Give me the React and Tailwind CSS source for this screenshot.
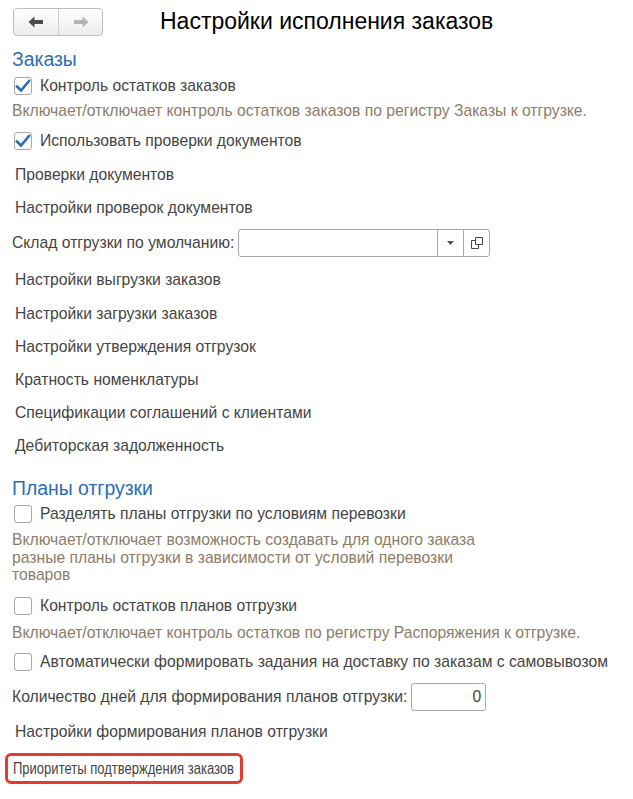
import React from "react";

const FONT = { fontFamily: '"Liberation Sans", Arial, sans-serif' };

function Checkbox({ checked }) {
  return (
    <span className="w-[18px] h-[18px] border border-[#a9a9a9] rounded-[3px] bg-white flex items-center justify-center shrink-0">
      {checked && (
        <svg width="16" height="14" viewBox="0 0 16 14">
          <path d="M2 7.5 L6 11.5 L14 2" fill="none" stroke="#2a6db5" strokeWidth="2.6" strokeLinecap="square" />
        </svg>
      )}
    </span>
  );
}

function CheckRow({ checked, label, h }) {
  return (
    <div className={`flex items-center gap-[8px] pl-[14px] ${h}`}>
      <Checkbox checked={checked} />
      <span className="text-[15.7px] text-[#444] whitespace-nowrap">{label}</span>
    </div>
  );
}

function LinkRow({ label, h = "h-[33px]" }) {
  return (
    <div className={`flex items-center pl-[15px] text-[15.7px] text-[#444] whitespace-nowrap ${h}`}>{label}</div>
  );
}

function Desc({ children, h }) {
  return (
    <div className={`pl-[12px] text-[15.7px] text-[#8b7c68] leading-[17.5px] flex items-center whitespace-nowrap ${h}`}>
      <div>{children}</div>
    </div>
  );
}

function Section({ title, h }) {
  return (
    <div className={`pl-[12px] text-[19.4px] text-[#2a6db5] flex items-center ${h}`}>{title}</div>
  );
}

export default function App() {
  return (
    <div className="w-[633px] h-[799px] bg-white overflow-hidden" style={FONT}>
      {/* header */}
      <div className="h-[46px] flex items-start">
        <div className="ml-[13px] mt-[8px] w-[90px] h-[28px] border border-[#bdbdbd] rounded-[4px] bg-gradient-to-b from-white to-[#ececec] flex">
          <div className="w-[45px] flex items-center justify-center border-r border-[#cfcfcf]">
            <svg width="16" height="12" viewBox="0 0 16 12">
              <path d="M0.5 6 L6.5 0.5 L6.5 4 L15 4 L15 8 L6.5 8 L6.5 11.5 Z" fill="#4a4a4a" />
            </svg>
          </div>
          <div className="flex-1 flex items-center justify-center">
            <svg width="16" height="12" viewBox="0 0 16 12">
              <path d="M15.5 6 L9.5 0.5 L9.5 4 L1 4 L1 8 L9.5 8 L9.5 11.5 Z" fill="#b4b4b4" />
            </svg>
          </div>
        </div>
        <div className="ml-[57px] mt-[6px] text-[23px] text-black leading-[30px]">Настройки исполнения заказов</div>
      </div>

      <Section title="Заказы" h="h-[28px]" />
      <CheckRow checked label="Контроль остатков заказов" h="h-[24px]" />
      <Desc h="h-[26px]">Включает/отключает контроль остатков заказов по регистру Заказы к отгрузке.</Desc>
      <CheckRow checked label="Использовать проверки документов" h="h-[34px]" />
      <LinkRow label="Проверки документов" h="h-[34px]" />
      <LinkRow label="Настройки проверок документов" h="h-[32px]" />

      <div className="h-[38px] flex items-center pl-[12px]">
        <span className="text-[15.7px] text-[#444] whitespace-nowrap">Склад отгрузки по умолчанию:</span>
        <div className="ml-[4px] w-[252px] h-[28px] border border-[#a9a9a9] rounded-[3px] bg-white flex">
          <div className="flex-1" />
          <div className="w-[26px] border-l border-[#a9a9a9] flex items-center justify-center">
            <svg width="7" height="4" viewBox="0 0 7 4">
              <path d="M0 0 L7 0 L3.5 4 Z" fill="#555" />
            </svg>
          </div>
          <div className="w-[26px] border-l border-[#a9a9a9] flex items-center justify-center">
            <svg width="12" height="12" viewBox="0 0 12 12">
              <path d="M4.5 0.5 H11.5 V7.5 H4.5 Z M4.5 3.5 H0.5 V11.5 H7.5 V7.5" fill="none" stroke="#444" strokeWidth="1" />
            </svg>
          </div>
        </div>
      </div>

      <LinkRow label="Настройки выгрузки заказов" h="h-[35px]" />
      <LinkRow label="Настройки загрузки заказов" />
      <LinkRow label="Настройки утверждения отгрузок" />
      <LinkRow label="Кратность номенклатуры" />
      <LinkRow label="Спецификации соглашений с клиентами" />
      <LinkRow label="Дебиторская задолженность" />

      <div className="h-[12px]" />
      <Section title="Планы отгрузки" h="h-[30px]" />
      <CheckRow label="Разделять планы отгрузки по условиям перевозки" h="h-[20px]" />
      <div className="h-[7px]" />
      <Desc h="h-[53px]">
        Включает/отключает возможность создавать для одного заказа
        <br />
        разные планы отгрузки в зависимости от условий перевозки
        <br />
        товаров
      </Desc>
      <div className="h-[4px]" />
      <CheckRow label="Контроль остатков планов отгрузки" h="h-[36px]" />
      <Desc h="h-[18px]">Включает/отключает контроль остатков по регистру Распоряжения к отгрузке.</Desc>
      <CheckRow label="Автоматически формировать задания на доставку по заказам с самовывозом" h="h-[40px]" />

      <div className="h-[30px] flex items-center pl-[12px]">
        <span className="text-[15.7px] text-[#444] whitespace-nowrap">Количество дней для формирования планов отгрузки:</span>
        <div className="ml-[4px] w-[75px] h-[28px] border border-[#a9a9a9] rounded-[3px] bg-white flex items-center justify-end pr-[4px] text-[15.7px] text-[#444] shrink-0">
          0
        </div>
      </div>

      <LinkRow label="Настройки формирования планов отгрузки" h="h-[40px]" />
      <div className="pl-[5px] pt-[1px]">
        <div className="w-[238px] h-[31px] border-[3px] border-[#e23b30] rounded-[6px] flex items-center pl-[5px] text-[15.7px] text-[#444] whitespace-nowrap overflow-hidden">
          <span className="inline-block origin-left scale-x-[0.83]">Приоритеты подтверждения заказов</span>
        </div>
      </div>
    </div>
  );
}
